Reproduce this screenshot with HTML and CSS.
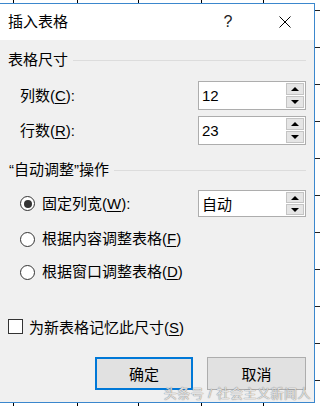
FILE: index.html
```html
<!DOCTYPE html>
<html lang="zh-CN">
<head>
  <meta charset="UTF-8" />
  <title>插入表格</title>
  <link rel="stylesheet" href="styles.css">
</head>
<body>

  <div class="dialog">
    <div class="titlebar">
      <span class="title">插入表格</span>
      <span class="help">?</span>
      <span class="close">
        <svg width="12" height="12" viewBox="0 0 12 12"><path d="M0.5 0.5 L11.5 11.5 M11.5 0.5 L0.5 11.5" stroke="#000" stroke-width="1" fill="none"/></svg>
      </span>
    </div>

    <div class="content">
      <div class="group-head head-size"><span>表格尺寸</span><i class="rule"></i></div>

      <div class="field-row row-cols">
        <span class="label">列数(<u>C</u>):</span>
        <div class="spin">
          <span class="spin-value">12</span>
          <div class="spin-btns"><b class="up"></b><b class="down"></b></div>
        </div>
      </div>

      <div class="field-row row-rows">
        <span class="label">行数(<u>R</u>):</span>
        <div class="spin">
          <span class="spin-value">23</span>
          <div class="spin-btns"><b class="up"></b><b class="down"></b></div>
        </div>
      </div>

      <div class="group-head head-auto"><span>“自动调整”操作</span><i class="rule"></i></div>

      <div class="field-row radio-row row-fixed">
        <span class="option"><span class="radio checked"></span><span>固定列宽(<u>W</u>):</span></span>
        <div class="spin spin-small">
          <span class="spin-value">自动</span>
          <div class="spin-btns"><b class="up"></b><b class="down"></b></div>
        </div>
      </div>

      <div class="radio-row row-content">
        <span class="option"><span class="radio"></span><span>根据内容调整表格(<u>F</u>)</span></span>
      </div>

      <div class="radio-row row-window">
        <span class="option"><span class="radio"></span><span>根据窗口调整表格(<u>D</u>)</span></span>
      </div>

      <div class="check-row">
        <span class="checkbox"></span><span>为新表格记忆此尺寸(<u>S</u>)</span>
      </div>

      <div class="buttons">
        <button class="btn btn-default">确定</button>
        <button class="btn">取消</button>
      </div>
    </div>

    <div class="watermark">头条号 / 社会主义新闻人</div>
  </div>

</body>
</html>
```

FILE: styles.css
```css
html, body {
  margin: 0;
  padding: 0;
  height: 100%;
  overflow: hidden;
}

body {
  font-family: "Liberation Sans", "Noto Sans CJK SC", sans-serif;
  font-size: 15px;
  color: #000;
  padding-top: 3px;
  box-sizing: border-box;
  background-color: #fff;
  /* spreadsheet grid behind the dialog */
  background-image:
    linear-gradient(#000, #000), linear-gradient(#000, #000), linear-gradient(#000, #000),
    linear-gradient(#000, #000), linear-gradient(#000, #000),
    repeating-linear-gradient(180deg, transparent 0 10px, #222 10px 11px, transparent 11px 37px);
  background-size: 1px 100%, 1px 100%, 1px 100%, 1px 100%, 1px 100%, 100% 100%;
  background-position: 13px 0, 77px 0, 138px 0, 201px 0, 263px 0, 0 0;
  background-repeat: no-repeat;
}

.dialog {
  position: relative;
  width: 315px;
  height: 400px;
  box-sizing: border-box;
  border: 1px solid #3b87cd;
  border-left: none;
  background: #f0f0f0;
  display: flex;
  flex-direction: column;
}

.titlebar {
  height: 36px;
  flex-shrink: 0;
  background: #fff;
  display: flex;
  align-items: center;
  padding-left: 8px;
  padding-right: 6px;
}

.title {
  flex: 1;
  line-height: 20px;
}

.help {
  width: 20px;
  text-align: center;
  color: #222;
  font-size: 16px;
}

.close {
  width: 46px;
  margin-left: 24px;
  display: flex;
  justify-content: center;
  align-items: center;
}

.content {
  flex: 1;
  display: flex;
  flex-direction: column;
  padding: 10px 8px 0 8px;
}

.group-head {
  height: 20px;
  line-height: 20px;
  display: flex;
  align-items: center;
  gap: 5px;
}

.group-head .rule {
  flex: 1;
  height: 1px;
  background: #dcdcdc;
}

.head-auto {
  margin-top: 15px;
  padding-left: 1px;
}

.field-row {
  display: flex;
  justify-content: space-between;
  align-items: center;
  padding-left: 12px;
}

.row-cols {
  margin-top: 11px;
}

.row-rows {
  margin-top: 6px;
}

.label {
  line-height: 20px;
}

u {
  text-decoration: underline;
  text-underline-offset: 2px;
  text-decoration-thickness: 1px;
}

.spin {
  width: 108px;
  height: 29px;
  box-sizing: border-box;
  border: 1px solid #adadad;
  background: #fff;
  display: flex;
  align-items: center;
}

.spin-small {
  height: 27px;
}

.spin-value {
  flex: 1;
  padding-left: 3px;
  font-size: 15px;
}

.spin-btns {
  width: 18px;
  align-self: stretch;
  display: flex;
  flex-direction: column;
  gap: 1px;
  padding: 1px 1px 1px 0;
}

.spin-btns b {
  flex: 1;
  background: #e5e5e5;
  border: 1px solid #c4c4c4;
  display: flex;
  align-items: center;
  justify-content: center;
}

.spin-btns b::before {
  content: "";
  width: 0;
  height: 0;
  border-left: 4px solid transparent;
  border-right: 4px solid transparent;
}

.spin-btns .up::before {
  border-bottom: 4px solid #000;
}

.spin-btns .down::before {
  border-top: 4px solid #000;
}

.radio-row {
  padding-left: 12px;
}

.row-fixed {
  margin-top: 10px;
}

.row-content {
  margin-top: 12px;
  height: 20px;
}

.row-window {
  margin-top: 13px;
  height: 20px;
}

.option {
  display: flex;
  align-items: center;
  gap: 7px;
  line-height: 20px;
}

.radio {
  width: 15px;
  height: 15px;
  box-sizing: border-box;
  border: 1px solid #333;
  border-radius: 50%;
  background: #fff;
  display: flex;
  align-items: center;
  justify-content: center;
}

.radio.checked::after {
  content: "";
  width: 8px;
  height: 8px;
  border-radius: 50%;
  background: #333;
}

.check-row {
  margin-top: 34px;
  height: 20px;
  display: flex;
  align-items: center;
  gap: 6px;
}

.checkbox {
  width: 15px;
  height: 15px;
  box-sizing: border-box;
  border: 1px solid #333;
  background: #fff;
}

.buttons {
  margin-top: 21px;
  display: flex;
  justify-content: flex-end;
  gap: 14px;
}

.btn {
  width: 99px;
  height: 33px;
  font-family: inherit;
  font-size: 15px;
  color: #000;
  background: #e1e1e1;
  border: 1px solid #adadad;
  padding: 0;
}

.btn-default {
  width: 98px;
  border: 2px solid #0078d7;
}

.watermark {
  position: absolute;
  right: 3px;
  bottom: 0;
  font-size: 13px;
  line-height: 16px;
  color: rgba(255, 255, 255, 0.75);
  text-shadow: 0 0 1px #888, 0 0 1px #888;
  letter-spacing: 0.5px;
}
```
